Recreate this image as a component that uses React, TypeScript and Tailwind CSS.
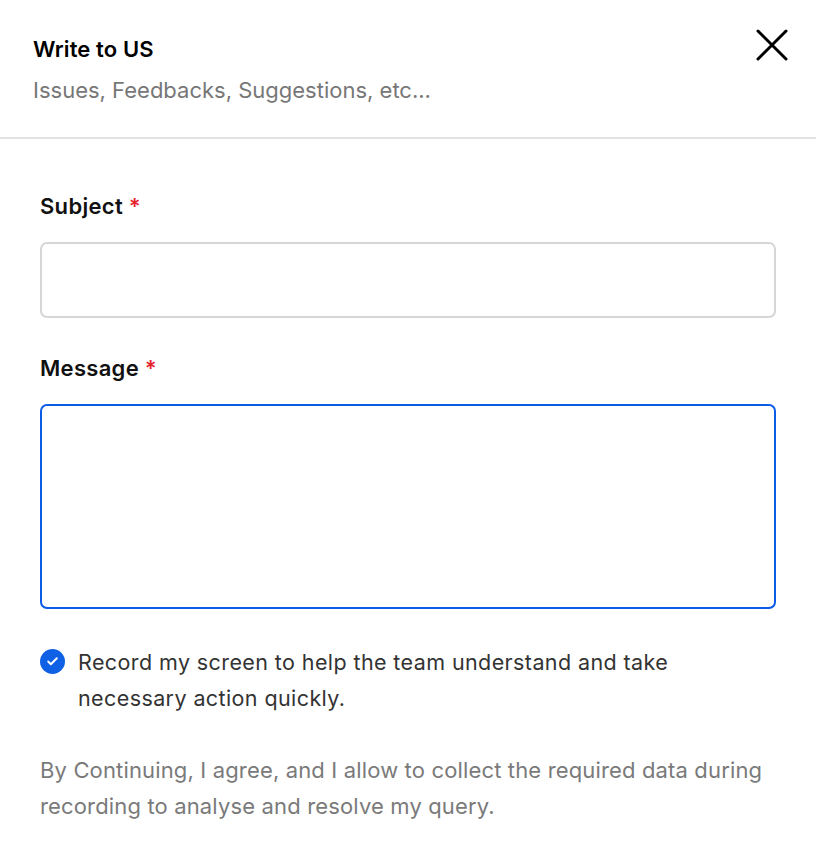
import { Check } from 'lucide-react';

const font = { fontFamily: 'Inter, "Noto Sans", sans-serif' };

function Label({ text }: { text: string }) {
  return (
    <div className="text-[22px] font-semibold leading-[28px] tracking-[0.3px] text-[#111]">
      {text} <span className="text-[#e5242b]">*</span>
    </div>
  );
}

export default function App() {
  return (
    <div className="min-h-screen w-full bg-white" style={font}>
      {/* Header */}
      <div className="flex items-start justify-between border-b-2 border-[#e3e3e3] pb-[33px] pl-[33px] pr-[28px] pt-[35px]">
        <div>
          <h1 className="text-[22px] font-semibold leading-[28px] tracking-[0.1px] text-black">Write to US</h1>
          <p className="mt-[13px] text-[22px] leading-[28px] text-[#777]">Issues, Feedbacks, Suggestions, etc...</p>
        </div>
        <button className="mt-[-6px] text-black">
          <svg width="32" height="32" viewBox="0 0 32 32" fill="none" stroke="currentColor" strokeWidth="3" strokeLinecap="round">
            <path d="M2 2 L30 30 M30 2 L2 30" />
          </svg>
        </button>
      </div>

      {/* Form */}
      <div className="px-10 pt-[53px]">
        <Label text="Subject" />
        <input className="mt-[22px] block h-[76px] w-full rounded-[7px] border-2 border-[#d6d6d6] px-4 text-xl outline-none" />

        <div className="mt-[36px]">
          <Label text="Message" />
        </div>
        <textarea className="mt-[22px] block h-[205px] w-full resize-none rounded-[7px] border-2 border-[#0b5ce5] px-4 py-3 text-xl outline-none" />

        <div className="mt-[35px] flex items-start gap-[13px]">
          <span className="mt-[5px] grid h-[25px] w-[25px] shrink-0 place-items-center rounded-full bg-[#1060e6] text-white">
            <Check className="h-[13px] w-[13px]" strokeWidth={3.5} />
          </span>
          <p className="max-w-[640px] text-[21.5px] leading-[36px] tracking-[0.4px] text-[#333]">
            Record my screen to help the team understand and take necessary action quickly.
          </p>
        </div>

        <p className="mt-[36px] text-[22px] leading-[36px] tracking-[0.15px] text-[#7a7a7a]">
          By Continuing, I agree, and I allow to collect the required data during recording to analyse and resolve my query.
        </p>
      </div>
    </div>
  );
}
